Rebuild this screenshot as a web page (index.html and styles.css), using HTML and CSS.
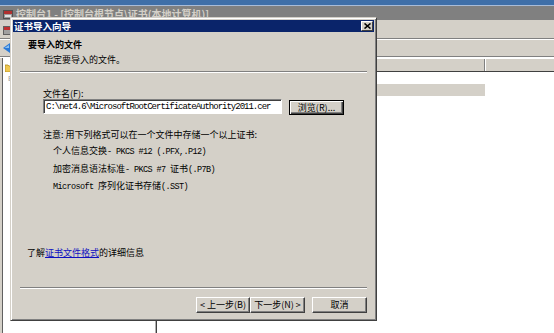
FILE: index.html
```html
<!DOCTYPE html>
<html>
<head>
<meta charset="utf-8">
<link rel="stylesheet" href="styles.css">
</head>
<body>
<div class="app">
  <div class="topstrip"></div>
  <div class="wtitle">
    <svg class="wicon" width="10" height="10" viewBox="0 0 10 10"><rect x="0.5" y="1.5" width="9" height="8" fill="#9a9a9a" stroke="#505050"/><rect x="1" y="2" width="8" height="3" fill="#b03030"/><rect x="2" y="6" width="6" height="2" fill="#e0e0e0"/></svg>
    <span class="wtext">控制台1 - [控制台根节点\证书(本地计算机)]</span>
  </div>
  <div class="menubar">
    <svg width="8" height="9" viewBox="0 0 8 9"><rect x="0.5" y="0.5" width="7" height="8" fill="#a0a0a0" stroke="#606060"/><rect x="1" y="1" width="6" height="3" fill="#c03030"/></svg>
  </div>
  <div class="toolbar">
    <svg width="8" height="10" viewBox="0 0 8 10"><path d="M0 5L7 0V10Z" fill="#2a7ad8"/><path d="M1.5 5L6 2V5Z" fill="#8cc0f0"/></svg>
  </div>
  <div class="main">
    <div class="tree">
      <div class="trow"><svg width="7" height="8" viewBox="0 0 7 8"><path d="M0 1H3L4 2H7V8H0Z" fill="#f0c850" stroke="#b08a20" stroke-width="0.8"/></svg></div>
      <div class="trow exp">E</div>
    </div>
    <div class="list">
      <div class="lhead"><div class="col c1"></div><div class="col c2"></div></div>
      <div class="lrow"></div>
    </div>
  </div>
</div>

<div class="dlg">
  <div class="dtitle">
    <span class="dtext">证书导入向导</span>
    <span class="xbtn"><svg width="7" height="6" viewBox="0 0 7 6"><path d="M0.5 0.5L6.5 5.5M6.5 0.5L0.5 5.5" stroke="#000" stroke-width="1.6"/></svg></span>
  </div>
  <div class="dbody">
    <div class="head">
      <div class="h1">要导入的文件</div>
      <div class="h2">指定要导入的文件。</div>
    </div>
    <div class="sep"></div>
    <div class="content">
      <div class="lbl">文件名(F):</div>
      <div class="frow">
        <div class="input"><span class="mono">C:\net4.6\MicrosoftRootCertificateAuthority2011.cer</span></div>
        <div class="btn def">浏览(R)...</div>
      </div>
      <div class="note">注意: 用下列格式可以在一个文件中存储一个以上证书:</div>
      <div class="fmts">
        <div>个人信息交换<span class="mono">- PKCS #12 (.PFX,.P12)</span></div>
        <div>加密消息语法标准<span class="mono">- PKCS #7 </span>证书<span class="mono">(.P7B)</span></div>
        <div><span class="mono">Microsoft </span>序列化证书存储<span class="mono">(.SST)</span></div>
      </div>
    </div>
    <div class="more">了解<a class="link">证书文件格式</a>的详细信息</div>
    <div class="sep bottom"></div>
    <div class="btns">
      <div class="btn">&lt; 上一步(B)</div>
      <div class="btn">下一步(N) &gt;</div>
      <div class="btn cancel">取消</div>
    </div>
  </div>
</div>
</body>
</html>
```

FILE: styles.css
```css
* { box-sizing: border-box; }
html, body { margin: 0; padding: 0; }
body {
  width: 554px;
  height: 333px;
  overflow: hidden;
  position: relative;
  background: #d4d0c8;
  font-family: "Noto Sans CJK SC", "Noto Sans", sans-serif;
  font-size: 9px;
  color: #000;
}
.app { display: flex; flex-direction: column; height: 333px; }
.topstrip { height: 6px; background: #3f6fa8; border-bottom: 1px solid #a9bcd8; }
.wtitle {
  height: 14px;
  background: #808080;
  display: flex;
  align-items: center;
  padding-left: 3px;
  gap: 3px;
}
.wicon { margin-top: 2px; }
.wtext { color: #d4d0c8; font-weight: bold; font-size: 10px; line-height: 14px; margin-top: 2px; }
.menubar {
  height: 19px;
  border-bottom: 1px solid #808080;
  display: flex;
  align-items: center;
  padding: 2px 0 0 3px;
}
.toolbar {
  height: 18px;
  border-top: 1px solid #fff;
  border-bottom: 1px solid #808080;
  display: flex;
  align-items: center;
  padding-left: 3px;
}
.main { flex: 1; display: flex; padding-left: 2px; border-top: 1px solid #fff; }
.tree {
  width: 154px;
  background: #fff;
  border-left: 1px solid #606060;
  border-right: 1px solid #b0b0b0;
  padding: 4px 0 0 2px;
}
.trow { height: 11px; display: flex; align-items: center; }
.exp { color: #a0a0a0; font-size: 8px; padding-left: 3px; font-family: "Liberation Sans", sans-serif; }
.list { flex: 1; background: #fff; border-left: 1px solid #404040; }
.lhead {
  height: 14px;
  display: flex;
  background: #d4d0c8;
  border-top: 1px solid #fff;
  border-bottom: 1px solid #404040;
}
.col { height: 100%; }
.c1 { width: 328px; border-right: 1px solid #808080; }
.c2 { flex: 1; border-left: 1px solid #fff; }
.lrow { width: 328px; height: 12px; margin-top: 12px; background: #d4d0c8; }

/* dialog */
.dlg {
  position: absolute;
  left: 10px;
  top: 17px;
  width: 367px;
  height: 304px;
  background: #d4d0c8;
  border: 1px solid;
  border-color: #d4d0c8 #404040 #404040 #d4d0c8;
  box-shadow: inset 1px 1px #fff, inset -1px -1px #808080;
  padding: 2px;
  display: flex;
  flex-direction: column;
}
.dtitle {
  height: 12px;
  background: #0a246a;
  display: flex;
  align-items: center;
  justify-content: space-between;
  padding-left: 1px;
}
.dtext { color: #fff; font-weight: bold; font-size: 9.5px; line-height: 12px; }
.xbtn {
  width: 12px;
  height: 10px;
  margin-right: 1px;
  background: #d4d0c8;
  border: 1px solid;
  border-color: #fff #404040 #404040 #fff;
  display: flex;
  align-items: center;
  justify-content: center;
}
.dbody { flex: 1; display: flex; flex-direction: column; }
.head { padding: 7px 0 0 15px; }
.h1 { font-weight: bold; line-height: 12px; }
.h2 { line-height: 12px; margin-top: 3px; padding-left: 16px; }
.sep {
  margin: 5px 7px 0;
  height: 2px;
  border-top: 1px solid #808080;
  border-bottom: 1px solid #fff;
}
.content { padding-left: 30px; }
.lbl { margin-top: 15px; line-height: 12px; }
.frow { display: flex; align-items: flex-start; margin-top: -1px; }
.input {
  width: 239px;
  height: 15px;
  background: #fff;
  border: 1px solid;
  border-color: #808080 #fff #fff #808080;
  box-shadow: inset 1px 1px #404040;
  padding: 0 0 0 2px;
  display: flex;
  align-items: center;
  overflow: hidden;
  white-space: nowrap;
}
.mono {
  font-family: "Liberation Mono", monospace;
  font-size: 8.5px;
  letter-spacing: -0.6px;
}
.input .mono { font-size: 9px; letter-spacing: -1px; }
.btn {
  height: 16px;
  width: 55px;
  background: #d4d0c8;
  border: 1px solid;
  border-color: #fff #404040 #404040 #fff;
  box-shadow: inset -1px -1px #808080;
  display: flex;
  align-items: center;
  justify-content: center;
  line-height: 12px;
  white-space: nowrap;
}
.btn.def {
  margin: 1px 0 0 7px;
  height: 15px;
  border: 1px solid #000;
  box-shadow: inset 1px 1px #fff, inset -1px -1px #404040, inset -2px -2px #808080;
}
.note { margin-top: 14px; line-height: 12px; }
.fmts { margin-top: 2px; padding-left: 10px; line-height: 15.5px; }
.more { margin-top: auto; padding-left: 14px; line-height: 12px; }
.link { color: #1010c0; text-decoration: underline; }
.sep.bottom { margin-top: 28px; }
.btns {
  display: flex;
  justify-content: flex-end;
  padding: 8px 7px 5px 0;
}
.btns .btn:first-child { width: 54px; }
.btn.cancel { margin-left: 7px; }
```
